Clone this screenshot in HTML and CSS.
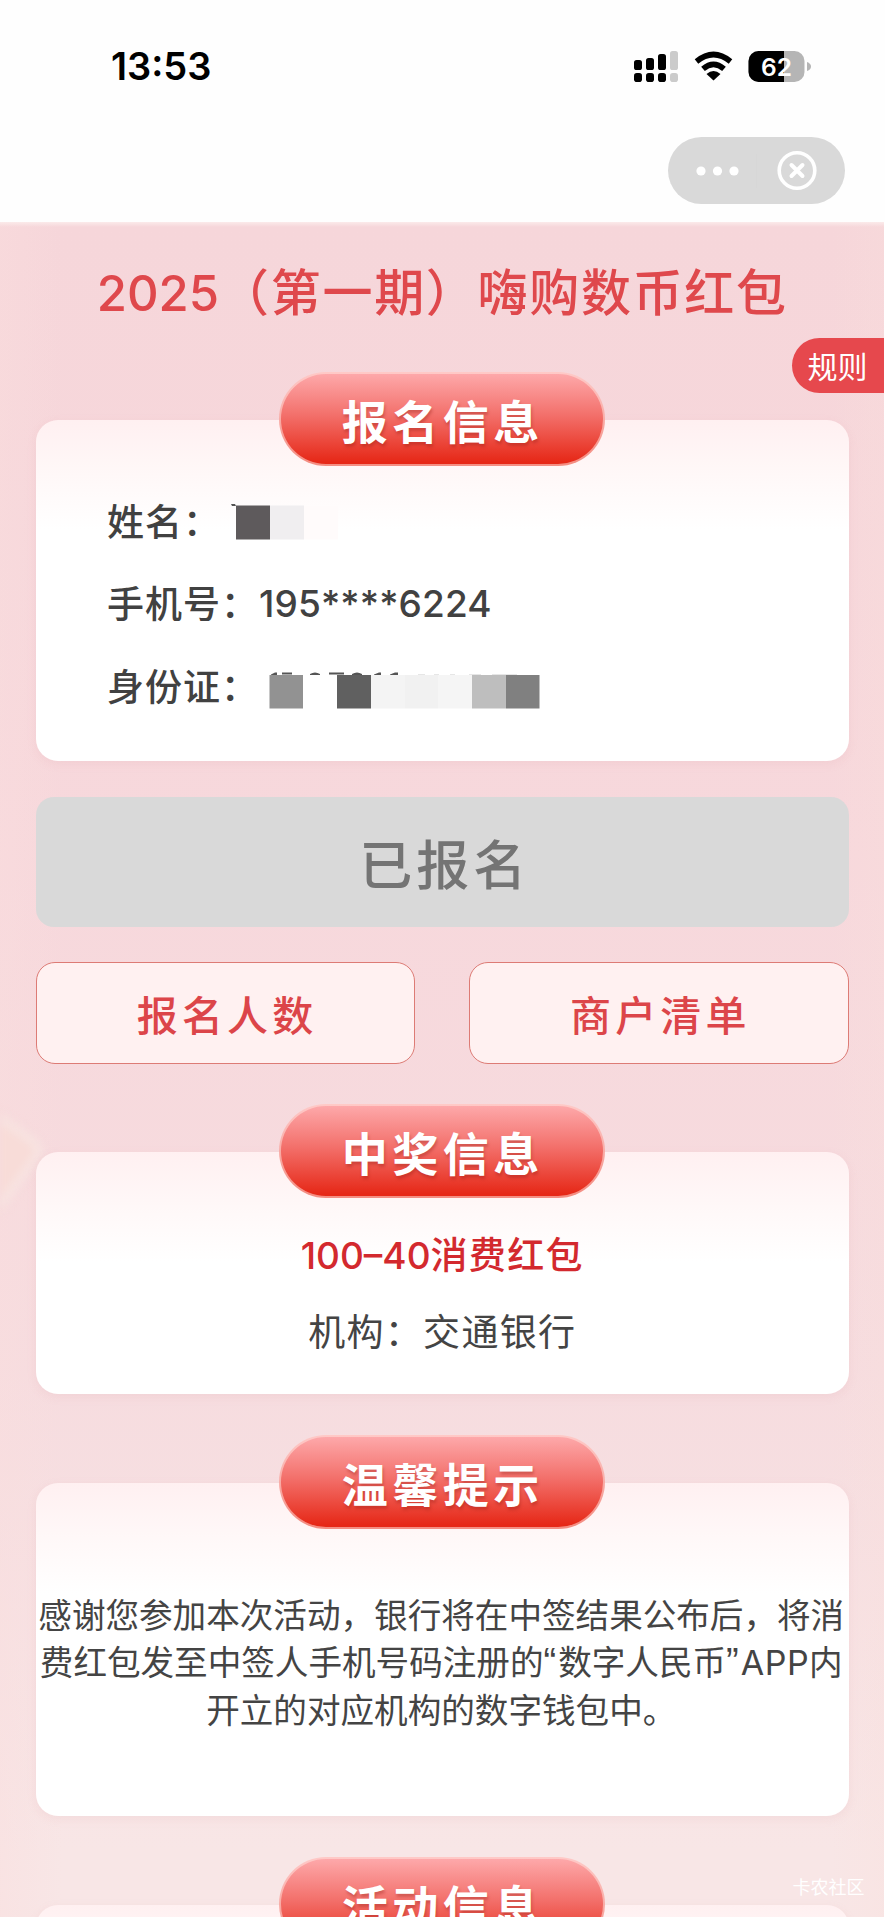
FILE: index.html
```html
<!DOCTYPE html>
<html lang="zh-CN">
<head>
<meta charset="utf-8">
<title>嗨购数币红包</title>
<link rel="stylesheet" href="styles.css">
</head>
<body>
<div class="screen">
  <header class="top">
    <div class="status">
      <span class="time">13:53</span>
      <svg class="status-icons" width="180" height="36" viewBox="632 49 180 36">
        <g fill="#000">
          <rect x="634" y="60" width="8" height="10" rx="2.6"/><rect x="646" y="58" width="8" height="12" rx="2.6"/><rect x="658" y="54" width="8" height="16" rx="2.6"/>
          <rect x="634" y="73" width="8" height="9" rx="2.8"/><rect x="646" y="73" width="8" height="9" rx="2.8"/><rect x="658" y="73" width="8" height="9" rx="2.8"/>
        </g>
        <g fill="#cbcbcb"><rect x="670" y="51" width="8" height="19" rx="2.6"/><rect x="670" y="73" width="8" height="9" rx="2.8"/></g>
        <g fill="none" stroke="#000" stroke-width="5.6"><path d="M696.5 61.5Q713.5 47.5 730.5 61.5"/><path d="M703 68.8Q713.5 59.8 724 68.8"/></g>
        <path d="M713.5 80.5L706.5 74Q713.5 68 720.5 74Z"/>
        <clipPath id="cell"><rect x="748.5" y="51" width="56" height="31" rx="10"/></clipPath>
        <g clip-path="url(#cell)"><rect x="748" y="50" width="57" height="33" fill="#b5b5b5"/><rect x="748" y="50" width="36" height="33" fill="#000"/></g>
        <path d="M807 62Q811 63.5 811 66.5T807 71Z" fill="#b5b5b5"/>
        <text class="charge" x="776.5" y="75.5" text-anchor="middle">62</text>
      </svg>
    </div>
    <div class="capsule">
      <svg width="177" height="67" viewBox="0 0 177 67">
        <g fill="#fff"><circle cx="33" cy="34" r="4.6"/><circle cx="49.5" cy="34" r="4.6"/><circle cx="66" cy="34" r="4.6"/></g>
        <path d="M88.5 17V51" stroke="#d7d7d7"/>
        <g fill="none" stroke="#fff"><circle cx="129" cy="33.5" r="17.8" stroke-width="3.6"/><path d="M123.5 28L134.500 39M134.500 28L123.5 39" stroke-width="4" stroke-linecap="round"/></g>
      </svg>
    </div>
  </header>

  <main class="page">
    <h1 class="title"><span class="year">2025</span>（第一期）嗨购数币红包</h1>
    <a class="rules">规则</a>

    <section class="panel panel-info">
      <h2 class="pill">报名信息</h2>
      <div class="row"><span>姓名：</span>
        <svg class="mask-name" width="108" height="38" viewBox="230 504 108 38"><path d="M231 505h4l1 2h-4z" fill="#555"/><rect x="236" y="506.5" width="34" height="34" fill="#5e5a5c"/><rect x="270" y="506.5" width="34" height="34" fill="#f0eef0"/><rect x="304" y="506.5" width="34" height="34" fill="#fffbfb"/></svg>
      </div>
      <div class="row"><span>手机号：</span><span class="num">195****6224</span></div>
      <div class="row"><span>身份证：</span>
        <svg class="mask-id" width="272" height="38" viewBox="270 672 272 38">
          <path d="M272 675.5l4-2h2v3h-6zM283 673.5h10v2h-10zM311 675q5-3 10 0v1h-10zM330 673.5h15v2h-15zM353 675q5-3 10 0v1h-10zM375 675.5l5-2h2v3h-7zM391 675.5l5-2h3v3h-8z" fill="#555"/>
          <path d="M419 676h7M435 676h5M451 676h5M470 676h12M493 676h25" stroke="#ccc"/>
          <rect x="270.5" y="676" width="33.5" height="33.5" fill="#929292"/><rect x="338" y="676" width="34" height="33.5" fill="#606060"/><rect x="372" y="676" width="34" height="33.5" fill="#f4f4f4"/><rect x="406" y="676" width="33" height="33.5" fill="#f1f1f1"/><rect x="439" y="676" width="34" height="33.5" fill="#f5f5f5"/><rect x="473" y="676" width="34" height="33.5" fill="#bebebe"/><rect x="507" y="676" width="33.5" height="33.5" fill="#808080"/>
        </svg>
      </div>
    </section>

    <button class="done">已报名</button>
    <div class="actions"><button class="action">报名人数</button><button class="action">商户清单</button></div>

    <section class="panel panel-prize">
      <svg class="glow" width="60" height="150" viewBox="0 0 60 150">
        <path d="M0 10L36 36Q46 46 37 58L0 112Z" fill="#f8dcd8"/>
        <path d="M0 16L34 40Q42 47 34 58L0 104" fill="none" stroke="#f7e4e2" stroke-width="7"/>
      </svg>
      <h2 class="pill">中奖信息</h2>
      <p class="prize"><span class="amount">100–40</span>消费红包</p>
      <p class="bank">机构：交通银行</p>
    </section>

    <section class="panel panel-tips">
      <h2 class="pill">温馨提示</h2>
      <p class="tips">感谢您参加本次活动，银行将在中签结果公布后，将消<br>费红包发至中签人手机号码注册的<span class="quote">“</span>数字人民币<span class="quote">”</span><span class="app">APP</span>内<br>开立的对应机构的数字钱包中。</p>
    </section>

    <section class="panel panel-event"><h2 class="pill">活动信息</h2></section>
    <div class="watermark">卡农社区</div>
  </main>
</div>
</body>
</html>
```

FILE: styles.css
```css
* { box-sizing: border-box; }
body { margin: 0; background: #fff; font-family: "Noto Sans CJK SC", sans-serif; }
h1, h2, p { margin: 0; font-weight: 500; }
button { font-family: inherit; padding: 0; }
svg { display: block; flex: none; }

.screen { width: 885px; height: 1917px; overflow: hidden; display: flex; flex-direction: column; }
.top { height: 222px; flex: none; background: #fefefe; display: flex; flex-direction: column; }
.status { height: 137px; padding: 0 73px 3px 111px; display: flex; align-items: center; justify-content: space-between; }
.time { font: 600 38px/1 Inter, sans-serif; letter-spacing: 0; margin-top: -2px; color: #000; }
.status-icons { overflow: visible; }
.charge { font: 600 24.5px Inter, sans-serif; fill: #fff; }
.capsule { width: 177px; height: 67px; margin-left: 668px; border-radius: 34px; background: #d9d9d9; }

.page {
  position: relative; width: 883.5px; height: 1695px; padding: 0 35px 0 36px; overflow: hidden;
  display: flex; flex-direction: column; flex: none;
  background:
    linear-gradient(#fbeaea 0, transparent 5px),
    linear-gradient(90deg, rgba(250,222,222,.4), transparent 7%, transparent 94%, rgba(250,224,220,.25)),
    linear-gradient(#f6d6da, #f7d8dc 38%, #f6dcdf 68%, #f8e6e6 96%);
}
.title {
  height: 150px; flex: none; padding-top: 29px; text-align: center; white-space: nowrap;
  font-size: 50px; line-height: 76px; letter-spacing: 1.7px; color: #df484c;
}
.year { font-family: Inter, sans-serif; font-size: 49px; line-height: 1; letter-spacing: 0; }
.rules {
  position: absolute; right: 0; top: 116px; width: 92px; height: 55px;
  padding-left: 16px; border-radius: 28px 0 0 28px; background: #e6484d;
  color: #fff; font-size: 30px; line-height: 54px;
}
.panel {
  position: relative; flex: none; margin-top: 48px; border-radius: 22px;
  background: linear-gradient(#fff0f1, #fff8f8 55px, #fff 110px);
  box-shadow: 0 3px 10px rgba(220,150,155,.13);
}
.pill {
  width: 326px; height: 94px; margin: -48px auto 0; border-radius: 47px;
  border: 2px solid rgba(255,225,220,.55); background: linear-gradient(#feabad, #f3716c 45%, #e62817 96%) border-box;
  text-align: center; font-size: 46px; font-weight: 700; line-height: 90px;
  letter-spacing: 4.5px; padding-left: 1px; color: #fff;
  text-shadow: 1px 3px 3px rgba(150,30,20,.35);
}
.panel-info { height: 341px; }
.row { height: 82.5px; padding-left: 71px; display: flex; align-items: center; font-size: 37px; line-height: 52px; font-weight: 500; letter-spacing: 1px; color: #414141; white-space: nowrap; }
.row span:first-child { margin-top: -3px; }
.pill + .row { margin-top: 14px; }
.row .num { font-family: Inter, sans-serif; font-size: 37px; letter-spacing: 0.15px; }
.mask-name { margin-left: 9px; margin-top: 2px; }
.mask-id { margin-left: 10px; margin-top: 8px; }

.done { flex: none; height: 130px; margin-top: 36px; border: 0; border-radius: 18px; background: #d9d9d9; color: #747474; font-size: 53px; font-weight: 500; line-height: 130px; letter-spacing: 4px; padding-left: 5px; }
.actions { flex: none; display: grid; grid-template-columns: 1fr 1fr; gap: 54px; height: 102px; margin-top: 35px; }
.action { border: 1.5px solid #dd7b75; border-radius: 19px; background: #fff1f1; color: #dc4549; font-size: 41px; font-weight: 500; letter-spacing: 4.200px; padding: 0 0 0 3px; }

.actions + .panel { margin-top: 88px; }
.glow { position: absolute; left: -36px; top: -50px; z-index: -1; filter: blur(4px); }
.page { z-index: 0; }
.panel-prize { height: 242px; text-align: center; }
.prize { margin-top: 20px; height: 70px; line-height: 70px; font-size: 37px; letter-spacing: 1.3px; color: #d3292e; }
.amount { font-family: Inter, sans-serif; font-size: 37px; line-height: 1; letter-spacing: 0; }
.bank { margin-top: 7px; line-height: 70px; font-size: 37px; font-weight: 400; letter-spacing: 1.3px; color: #444; }
.panel-prize + .panel { margin-top: 89px; }
.panel-tips { height: 333px; }
.tips { padding-top: 61px; margin-left: -2px; text-align: center; white-space: nowrap; font-size: 33.6px; font-weight: 400; line-height: 47.4px; color: #444; }
.quote { font-family: "Liberation Sans", sans-serif; font-size: 38px; line-height: 0; letter-spacing: 2px; }
.app { font-family: Inter, sans-serif; font-size: 34px; line-height: 0; letter-spacing: 0.5px; }
.panel-tips + .panel { margin-top: 89px; height: 200px; }
.watermark { position: absolute; right: 19px; bottom: 16px; font-size: 18px; line-height: 30px; color: #fff; }
```
